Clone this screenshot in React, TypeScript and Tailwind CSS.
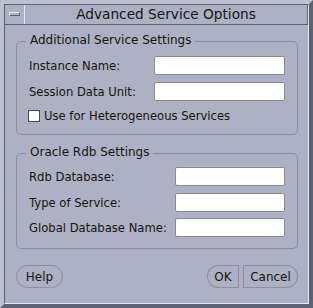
import React from "react";

function Field({ label, width }: { label: string; width: string }) {
  return (
    <div className="flex h-[19px] items-center justify-between">
      <span className="text-[11.6px] leading-[14px]">{label}</span>
      <input type="text" className={`h-[19px] ${width} rounded-[2px] border border-[#8b8b8f] bg-white`} />
    </div>
  );
}

function Group({ title, children, className }: { title: string; children: React.ReactNode; className: string }) {
  return (
    <div className={`relative mx-[10px] ml-[11px] rounded-[5px] border border-[#8d909c] pl-[12px] pr-[12px] ${className}`}>
      <span className="absolute left-[9px] top-[-9px] bg-[#aeb1c3] px-[4px] text-[12px] leading-[14px]">{title}</span>
      {children}
    </div>
  );
}

export default function App() {
  return (
    <div className="h-[308px] w-[313px] border-[4px] border-b-[#5d6172] border-l-[#bdc0cf] border-r-[#5d6172] border-t-[#bdc0cf] bg-[#aeb1c3] font-['DejaVu_Sans',sans-serif] text-[#141414]">
      <div className="flex h-full flex-col border border-b-[#e4e6ee] border-l-[#5d6172] border-r-[#e4e6ee] border-t-[#5d6172]">
        <div className="flex h-[20px] border-b border-r border-[#5d6172]">
          <div className="w-[20px] border-r border-r-[#e4e6ee] pl-[4px] pt-[7px]">
            <div className="h-[4px] w-[11px] border border-b-[#5d6172] border-l-[#eceef4] border-r-[#5d6172] border-t-[#eceef4]" />
          </div>
          <div className="flex-1 text-center text-[13.7px] leading-[19px]">Advanced Service Options</div>
        </div>

        <Group title="Additional Service Settings" className="mt-[16px] h-[94px] pt-[14px]">
          <Field label="Instance Name:" width="w-[131px]" />
          <div className="mt-[7px]">
            <Field label="Session Data Unit:" width="w-[131px]" />
          </div>
          <div className="ml-[-1px] mt-[8px] flex items-center gap-[4px]">
            <span className="h-[12px] w-[12px] border border-[#3f5358] bg-white" />
            <span className="text-[11.6px] leading-[14px]">Use for Heterogeneous Services</span>
          </div>
        </Group>

        <Group title="Oracle Rdb Settings" className="mt-[18px] h-[96px] pt-[13px]">
          <Field label="Rdb Database:" width="w-[110px]" />
          <div className="mt-[7px]">
            <Field label="Type of Service:" width="w-[110px]" />
          </div>
          <div className="mt-[6px]">
            <Field label="Global Database Name:" width="w-[110px]" />
          </div>
        </Group>

        <div className="ml-[11px] mr-[10px] mt-[16px] flex items-center">
          <button className="h-[23px] w-[47px] rounded-full border border-[#8d909c] text-[12px]">Help</button>
          <div className="flex-1" />
          <button className="h-[23px] w-[32px] rounded-l-full rounded-r-[4px] border border-[#8d909c] text-[12px]">OK</button>
          <button className="ml-[4px] h-[23px] w-[55px] rounded-l-[4px] rounded-r-full border border-[#8d909c] text-[12px]">Cancel</button>
        </div>
      </div>
    </div>
  );
}
